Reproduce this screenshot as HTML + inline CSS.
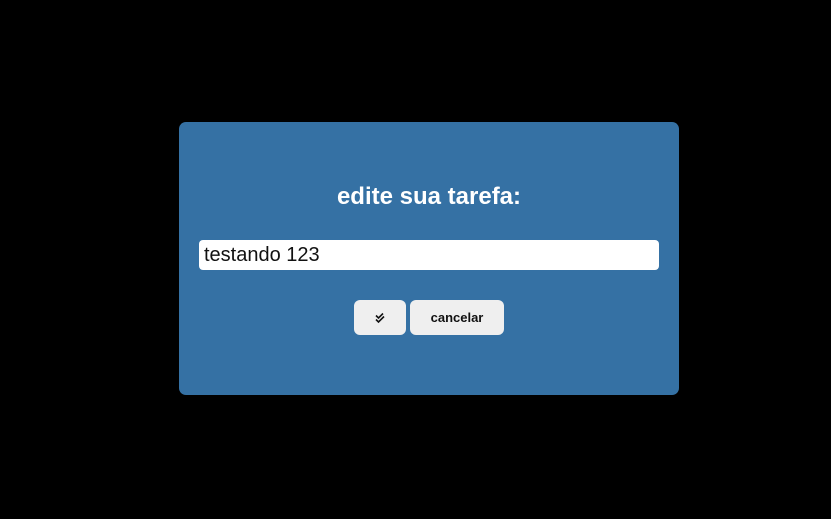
<!DOCTYPE html>
<html><head><style>
body{margin:0;width:831px;height:519px;background:#000;position:relative;font-family:"Liberation Sans",Arial,sans-serif;overflow:hidden}
.m{position:absolute;left:179px;top:122px;width:500px;height:273px;background:#3571a4;border-radius:7px}
h1{position:absolute;left:0;width:500px;top:61px;margin:0;text-align:center;color:#fff;font-size:24px;font-weight:bold}
.in{position:absolute;left:20px;top:118px;width:460px;height:30px;background:#fff;border-radius:4px;font-size:20px;line-height:30px;padding-left:5px;box-sizing:border-box;color:#111}
.b{position:absolute;top:178px;height:35px;background:#efefef;border-radius:6px;font-size:13px;font-weight:bold;color:#111;text-align:center;line-height:35px}
</style></head><body>
<div class="m">
<h1>edite sua tarefa:</h1>
<div class="in">testando 123</div>
<div class="b" style="left:175px;width:52px"><svg width="12" height="12" viewBox="0 0 12 12" style="vertical-align:middle;margin-top:-2px"><path d="M2 3.5l2.5 2.5L9 1.5M2 7.5l2.5 2.5L10 4.5" fill="none" stroke="#111" stroke-width="1.6"/></svg></div>
<div class="b" style="left:231px;width:94px">cancelar</div>
</div>
</body></html>
